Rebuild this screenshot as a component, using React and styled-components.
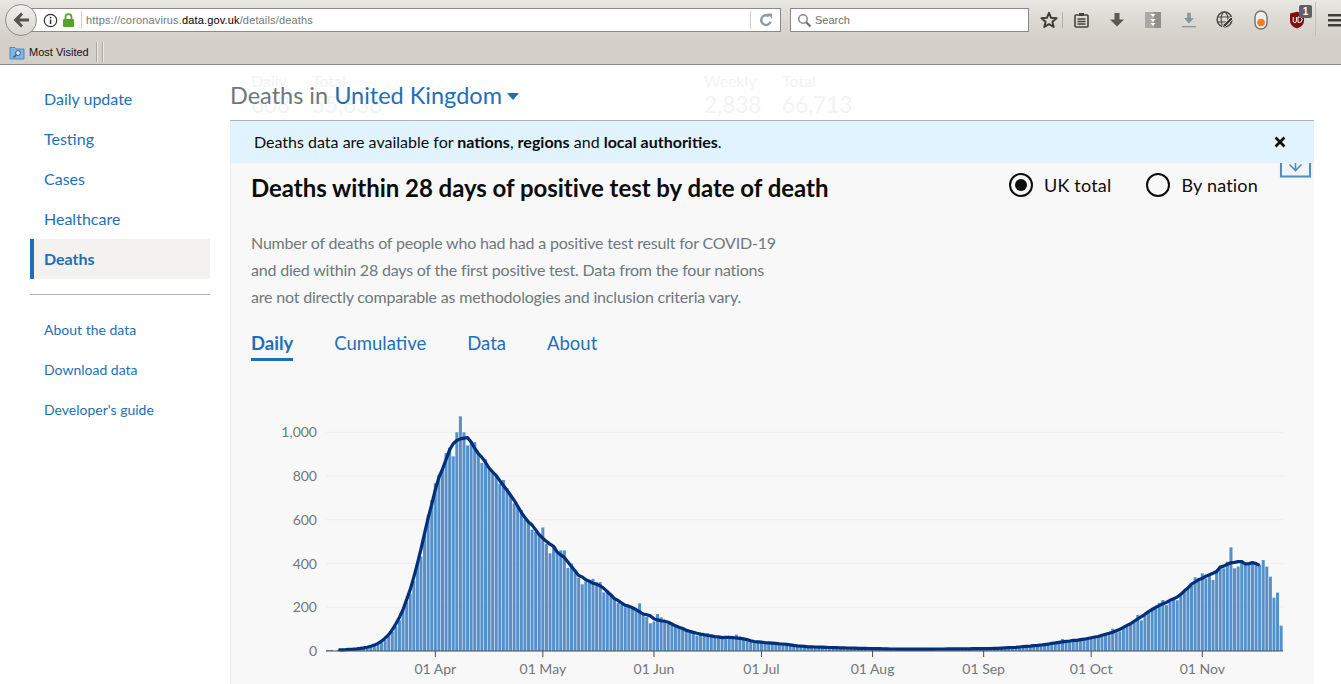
import React from 'react';
import styled, { createGlobalStyle } from 'styled-components';

const GlobalStyle = createGlobalStyle`
  html, body {
    margin: 0;
    padding: 0;
    background: #ffffff;
    overflow: hidden;
  }
  * {
    box-sizing: border-box;
  }
`;

const pageFont = `Lato, "Noto Sans", sans-serif`;
const chromeFont = `"Liberation Sans", Arial, sans-serif`;

const Window = styled.div`
  width: 1341px;
  height: 684px;
  overflow: hidden;
  display: flex;
  flex-direction: column;
  font-family: ${pageFont};
`;

/* browser chrome */
const Chrome = styled.div`
  height: 65px;
  flex: none;
  background: linear-gradient(#e9e7e3 0, #dcd9d3 20px, #d4d0c9 40px, #d3cfc8 100%);
  border-bottom: 1px solid #8b8b88;
  font-family: ${chromeFont};
  overflow: hidden;
`;

const NavRow = styled.div`
  height: 40px;
  display: flex;
  align-items: flex-start;
  padding: 4px 0 0 5px;
`;

const BackButton = styled.div`
  width: 32px;
  height: 32px;
  border-radius: 50%;
  flex: none;
  background: linear-gradient(#f1efec, #d9d6d0);
  border: 1px solid #8e8e8c;
  display: flex;
  align-items: center;
  justify-content: center;
  position: relative;
  z-index: 1;
`;

const UrlBar = styled.div`
  width: 759px;
  height: 24px;
  margin: 4px 0 0 -15px;
  padding-left: 17px;
  background: #ffffff;
  border: 1px solid #8a8a8a;
  display: flex;
  align-items: center;
  flex: none;
`;

const UrlIcon = styled.span`
  width: ${(p) => p.$w}px;
  flex: none;
  display: flex;
  align-items: center;
  justify-content: center;
`;

const UrlDivider = styled.span`
  width: 1px;
  height: 18px;
  background: #cfcfcf;
  flex: none;
  margin: ${(p) => p.$margin};
`;

const UrlText = styled.div`
  flex: 1;
  font-size: 11px;
  letter-spacing: 0.15px;
  color: #777777;
  white-space: nowrap;

  b {
    font-weight: 400;
    color: #000000;
  }
`;

const SearchBox = styled.div`
  width: 239px;
  height: 24px;
  margin: 4px 0 0 9px;
  background: #ffffff;
  border: 1px solid #8a8a8a;
  display: flex;
  align-items: center;
  gap: 3px;
  padding-left: 6px;
  font-size: 11px;
  color: #6d6d6d;
  flex: none;
`;

const ToolSlot = styled.div`
  width: ${(p) => p.$w || 36}px;
  margin-left: ${(p) => p.$ml || 0}px;
  height: 32px;
  flex: none;
  display: flex;
  align-items: center;
  justify-content: center;
  position: relative;
`;

const ToolDivider = styled.div`
  width: 1px;
  height: ${(p) => p.$h}px;
  margin-top: ${(p) => p.$top}px;
  background: ${(p) => p.$color};
  flex: none;
`;

const Badge = styled.span`
  position: absolute;
  top: 1px;
  left: 20px;
  width: 13px;
  height: 13px;
  border-radius: 2px;
  background: #5f6164;
  color: #ffffff;
  font-size: 10px;
  font-weight: 700;
  text-align: center;
  line-height: 13px;
`;

const BookmarkRow = styled.div`
  height: 24px;
  display: flex;
  align-items: center;
  padding-left: 9px;
  font-size: 11px;
  color: #111111;
`;

const BookmarkLabel = styled.span`
  margin-left: 4px;
`;

const DoubleBar = styled.span`
  width: 7px;
  height: 20px;
  margin-left: 7px;
  border-left: 1px solid #a9a6a0;
  border-right: 1px solid #a9a6a0;
  box-shadow: inset 1px 0 0 #f0eeea, 1px 0 0 #f0eeea;
`;

/* page */
const Page = styled.div`
  flex: 1;
  display: flex;
  gap: 20px;
  padding-left: 30px;
  min-height: 0;
`;

const Side = styled.nav`
  width: 180px;
  flex: none;
  padding-top: 14px;
`;

const SideItem = styled.a`
  display: flex;
  align-items: center;
  height: 40px;
  padding-bottom: 2px;
  padding-left: ${(p) => (p.$active ? 10 : 14)}px;
  font-size: ${(p) => (p.$small ? 14 : 16)}px;
  font-weight: ${(p) => (p.$active ? 700 : 400)};
  color: #1d70b8;
  background: ${(p) => (p.$active ? '#f3f2f1' : 'transparent')};
  border-left: ${(p) => (p.$active ? '4px solid #1d70b8' : 'none')};
`;

const SideRule = styled.hr`
  border: none;
  border-top: 1px solid #b1b4b6;
  margin: 15px 0 15px;
`;

const Main = styled.main`
  width: 1084px;
  flex: none;
  display: flex;
  flex-direction: column;
  min-height: 0;
`;

const TitleBar = styled.div`
  height: 55px;
  flex: none;
  position: relative;
  display: flex;
  align-items: center;
  padding-top: 4px;
  color: #6f777b;
  gap: 5px;
`;

const GhostStat = styled.div`
  position: absolute;
  top: 6px;
  left: ${(p) => p.$x}px;
  color: #f3f3f3;
  font-size: 16px;
  line-height: 20px;

  strong {
    display: block;
    font-size: 22.5px;
    font-weight: 400;
    line-height: 28px;
  }
`;

const Heading = styled.h1`
  position: relative;
  margin: 0;
  font-size: 23.5px;
  font-weight: 400;
  white-space: nowrap;

  span {
    color: #1d70b8;
  }
`;

const Caret = styled.span`
  position: relative;
  width: 0;
  height: 0;
  margin-top: 3px;
  border-left: 6px solid transparent;
  border-right: 6px solid transparent;
  border-top: 7px solid #1d70b8;
`;

const Banner = styled.div`
  height: 43px;
  flex: none;
  border-top: 1px solid #b1b4b6;
  background: #e1f3fe;
  display: flex;
  align-items: center;
  justify-content: space-between;
  padding: 0 28px 2px 24px;
  font-size: 16px;
  color: #0b0c0c;
  position: relative;
  z-index: 1;

  b {
    font-weight: 700;
  }

  svg {
    margin-top: 2px;
  }
`;

const Card = styled.section`
  flex: 1;
  min-height: 0;
  background: #f8f8f8;
  border-left: 1px solid #eeeeee;
  padding: 9px 0 0 20px;
  position: relative;
  overflow: hidden;
`;

const DownloadTab = styled.div`
  position: absolute;
  top: 0;
  right: 1px;
  width: 35px;
  height: 15px;
  background: #f3f3f3;
  display: flex;
  justify-content: center;
`;

const CardHead = styled.div`
  display: flex;
  align-items: center;
  height: 30px;
`;

const CardTitle = styled.h2`
  margin: 0;
  font-size: 24px;
  font-weight: 700;
  letter-spacing: -0.04px;
  color: #0b0c0c;
  white-space: nowrap;
`;

const RadioGroup = styled.div`
  margin-left: auto;
  padding-right: 56px;
  display: flex;
  gap: 35px;
  margin-top: -4px;
`;

const Radio = styled.label`
  display: flex;
  align-items: center;
  gap: 11px;
  font-size: 18px;
  letter-spacing: 0.2px;
  color: #0b0c0c;
`;

const RadioMark = styled.span`
  width: 24px;
  height: 24px;
  border-radius: 50%;
  border: 2px solid #0b0c0c;
  display: flex;
  align-items: center;
  justify-content: center;

  &::after {
    content: '';
    width: 12px;
    height: 12px;
    border-radius: 50%;
    background: ${(p) => (p.$on ? '#0b0c0c' : 'transparent')};
  }
`;

const Description = styled.p`
  margin: 27px 0 0;
  font-size: 16px;
  letter-spacing: -0.19px;
  line-height: 27px;
  color: #6f777b;
`;

const Tabs = styled.div`
  display: flex;
  gap: 41px;
  margin-top: 21px;
`;

const Tab = styled.a`
  font-size: 18.5px;
  line-height: 24px;
  padding-bottom: 3px;
  color: #1d70b8;
  font-weight: ${(p) => (p.$active ? 700 : 400)};
  border-bottom: 3px solid ${(p) => (p.$active ? '#1d70b8' : 'transparent')};
`;

const ChartSvg = styled.svg`
  display: block;
  margin: 39px 0 0 -21px;
`;

// daily deaths from 2 Mar
const daily = [
  5, 5, 0, 6, 6, 6, 7, 8, 10, 11, 13, 15, 18, 24, 30, 38, 50, 68, 88, 112,
  140, 187, 225, 262, 320, 400, 432, 540, 620, 690, 767, 805, 835, 905, 930, 890, 1000, 1073, 1000, 940,
  955, 955, 905, 860, 877, 830, 815, 800, 765, 782, 745, 715, 675, 660, 645, 600, 590, 555, 545, 530,
  565, 490, 447, 480, 450, 460, 460, 380, 400, 365, 335, 305, 318, 315, 330, 315, 315, 268, 278, 262,
  240, 220, 210, 200, 205, 195, 190, 218, 165, 155, 127, 135, 169, 154, 130, 125, 128, 112, 105, 110,
  95, 85, 85, 70, 78, 72, 82, 70, 65, 60, 55, 58, 60, 62, 75, 66, 50, 45, 48, 42,
  40, 40, 40, 38, 34, 36, 33, 32, 30, 28, 30, 22, 20, 18, 18, 20, 20, 18, 18, 16,
  16, 16, 15, 14, 14, 14, 13, 13, 12, 12, 12, 12, 11, 11, 10, 10, 10, 9, 9, 9,
  8, 8, 8, 8, 9, 9, 8, 9, 9, 8, 9, 9, 10, 9, 10, 10, 9, 10, 10,
  10, 11, 10, 11, 11, 10, 11, 12, 12, 13, 14, 15, 16, 17, 18, 19, 21, 22, 24, 26,
  27, 30, 30, 32, 35, 38, 55, 40, 44, 48, 46, 50, 55, 60, 58, 62, 68, 70, 75, 72,
  102, 85, 90, 105, 120, 120, 135, 165, 140, 170, 180, 190, 195, 220, 233, 210, 225, 240, 232,
  262, 270, 285, 300, 337, 330, 355, 332, 345, 325, 370, 385, 378, 408, 474, 378, 386, 416, 398, 398,
  408, 400, 393, 416, 386, 340, 244, 267, 116,
];

const left = 96;
const step = 3.584;
const base = 251;
const perDeath = 0.2187;

const xAt = (i) => left + (i + 0.5) * step;
const yAt = (v) => base - v * perDeath;

const linePoints = daily
  .map((_, i) => {
    if (i < 3 || i > 260) return null;
    const win = daily.slice(i - 3, i + 4);
    const avg = win.reduce((a, b) => a + b, 0) / win.length;
    return `${xAt(i).toFixed(1)},${yAt(avg).toFixed(1)}`;
  })
  .filter(Boolean)
  .join(' ');

const yTicks = [0, 200, 400, 600, 800, 1000];
const xTicks = [
  ['01 Apr', 30],
  ['01 May', 60],
  ['01 Jun', 91],
  ['01 Jul', 121],
  ['01 Aug', 152],
  ['01 Sep', 183],
  ['01 Oct', 213],
  ['01 Nov', 244],
];

const DeathsChart = () => (
  <ChartSvg width="1083" height="284" viewBox="0 0 1083 284" fontFamily={pageFont} fontSize="14" fill="#6f777b">
    {yTicks.map((t) => (
      <g key={t}>
        {t > 0 && <line x1={left} x2="1053" y1={yAt(t)} y2={yAt(t)} stroke="#eeeeee" />}
        <text x="87" y={yAt(t) + 5} textAnchor="end">{t.toLocaleString('en-GB')}</text>
      </g>
    ))}
    {daily.map((v, i) => (
      <rect key={i} x={xAt(i) - 1.5} y={yAt(v)} width="3" height={base - yAt(v)} fill="#5590cb" />
    ))}
    <polyline points={linePoints} fill="none" stroke="#00307a" strokeWidth="3.2" strokeLinejoin="round" />
    <line x1={left} x2="1053" y1={base} y2={base} stroke="#4a4f55" strokeWidth="1.2" />
    {xTicks.map(([label, i]) => (
      <g key={label}>
        <line x1={xAt(i)} x2={xAt(i)} y1={base} y2={base + 6} stroke="#4a4f55" />
        <text x={xAt(i)} y={base + 23} textAnchor="middle">{label}</text>
      </g>
    ))}
  </ChartSvg>
);

/* toolbar drawings */
const BackIcon = () => (
  <svg width="20" height="20" viewBox="0 0 20 20">
    <path d="M10 2.5 2.5 10l7.5 7.5 2-2L8.4 11.5H18v-3H8.4L12 4.5z" fill="#57534a" />
  </svg>
);

const InfoIcon = () => (
  <svg width="15" height="15" viewBox="0 0 15 15" fill="none">
    <circle cx="7.5" cy="7.5" r="6.2" stroke="#333" strokeWidth="1.2" />
    <rect x="6.8" y="6.5" width="1.5" height="4.6" fill="#333" />
    <rect x="6.8" y="3.8" width="1.5" height="1.6" fill="#333" />
  </svg>
);

const LockIcon = () => (
  <svg width="13" height="14" viewBox="0 0 13 14" fill="none">
    <path d="M3.5 6V4.2a3 3 0 0 1 6 0V6" stroke="#55a32c" strokeWidth="1.8" />
    <rect x="1" y="6" width="11" height="8" rx="1" fill="#55a32c" />
  </svg>
);

const ReloadIcon = () => (
  <svg width="14" height="14" viewBox="0 0 14 14" fill="none">
    <path d="M11.6 8.6A4.8 4.8 0 1 1 9.8 3.2" stroke="#8c98a4" strokeWidth="2.4" />
    <path d="M8 .4h5v5z" fill="#8c98a4" />
  </svg>
);

const SearchIcon = () => (
  <svg width="15" height="15" viewBox="0 0 15 15" fill="none">
    <circle cx="6" cy="6" r="4.2" stroke="#8a8a8a" strokeWidth="1.5" />
    <path d="M9.2 9.2 13.5 13.5" stroke="#6f6f6f" strokeWidth="2.2" />
  </svg>
);

const StarIcon = () => (
  <svg width="18" height="18" viewBox="0 0 18 18" fill="none">
    <path d="M9 1.8 11.1 6.8 16.5 7.2 12.4 10.7 13.7 16 9 13.2 4.3 16 5.6 10.7 1.5 7.2 6.9 6.8z" stroke="#3f3d36" strokeWidth="2" strokeLinejoin="round" />
  </svg>
);

const ClipboardIcon = () => (
  <svg width="15" height="16" viewBox="0 0 15 16" fill="none">
    <rect x="1" y="3" width="13" height="12" rx="1" stroke="#45433c" strokeWidth="1.6" />
    <rect x="5" y="1" width="5" height="3" fill="#45433c" />
    <path d="M3.5 7h8M3.5 9.5h8M3.5 12h8" stroke="#45433c" strokeWidth="1.3" />
  </svg>
);

const DownArrowIcon = ({ color = '#5c5a50', bar }) => (
  <svg width="16" height="16" viewBox="0 0 16 16">
    <path d="M5.5 1h5v6.5H15L8 14.5 1 7.5h4.5z" fill={color} transform={bar ? 'translate(2.4 0) scale(.7 .8)' : undefined} />
    {bar && <rect x="1" y="14" width="14" height="1.3" fill={color} />}
  </svg>
);

const ZipIcon = () => (
  <svg width="16" height="18" viewBox="0 0 16 18">
    <rect x="0" y="1" width="16" height="16" fill="#a9a8a4" />
    <path d="M9 1h7v16H9z" fill="#8f8e8a" />
    <path d="M5.5 3h5l-2.5 3zM5.5 8h5l-2.5 3zM5.5 12h5l-2.5 3z" fill="#ffffff" />
  </svg>
);

const GlobeIcon = () => (
  <svg width="18" height="18" viewBox="0 0 18 18" fill="none" stroke="#4a4944" strokeWidth="1.1">
    <circle cx="8.5" cy="8.5" r="7.4" strokeWidth="1.5" />
    <ellipse cx="8.5" cy="8.5" rx="3.4" ry="7.4" />
    <path d="M1.5 6h14M1.5 11h14" />
    <path d="M15 6 7.4 13.6 6 17l3.4-1.4L17 8z" fill="#3c3b37" stroke="#dcd9d3" strokeWidth="1" />
  </svg>
);

const ToggleIcon = () => (
  <svg width="14" height="20" viewBox="0 0 14 20">
    <rect x="1" y="1" width="12" height="18" rx="6" fill="#eeeeee" stroke="#6f7276" strokeWidth="1.4" />
    <circle cx="7" cy="12.5" r="3.8" fill="#f47b20" />
  </svg>
);

const ShieldIcon = () => (
  <svg width="16" height="18" viewBox="0 0 16 18">
    <path d="M8 .8 15 2.5v7c0 4-3 6.6-7 7.9-4-1.3-7-3.9-7-7.9v-7z" fill="#7f0e13" />
    <path d="M4.2 6v4a1.6 1.6 0 0 0 3.2 0V6M9 6v5.4h1.4a2.7 2.7 0 0 0 0-5.4z" fill="none" stroke="#ffffff" strokeWidth="1" />
  </svg>
);

const MenuIcon = () => (
  <svg width="16" height="14" viewBox="0 0 16 14">
    <path d="M0 1h16v2.4H0zM0 6h16v2.4H0zM0 11h16v2.4H0z" fill="#3f3d37" />
  </svg>
);

const FolderIcon = () => (
  <svg width="16" height="15" viewBox="0 0 16 15">
    <path d="M1 2.5h5l1.2 1.5H15v10H1z" fill="#7db7e4" stroke="#4d88b8" />
    <circle cx="9" cy="8" r="2.4" fill="#dcecf8" stroke="#2c5f92" />
    <path d="M7.3 9.8 4.5 12.3" stroke="#2c5f92" strokeWidth="1.6" />
  </svg>
);

const CloseIcon = () => (
  <svg width="12" height="12" viewBox="0 0 12 12">
    <path d="M1.5 1.5 10.5 10.5M10.5 1.5 1.5 10.5" stroke="#0b0c0c" strokeWidth="2.6" />
  </svg>
);

const DownloadBoxIcon = () => (
  <svg width="31" height="15" viewBox="0 0 31 15" fill="none">
    <path d="M1 0v13.5h29V0" stroke="#4f8cc6" strokeWidth="2" />
    <path d="M9.5 1.5 15.5 7.5 21.5 1.5M15.5 0v7" stroke="#4f8cc6" strokeWidth="1.6" />
  </svg>
);

const App = () => (
  <Window>
    <GlobalStyle />
    <Chrome>
      <NavRow>
        <BackButton><BackIcon /></BackButton>
        <UrlBar>
          <UrlIcon $w={20}><InfoIcon /></UrlIcon>
          <UrlIcon $w={16}><LockIcon /></UrlIcon>
          <UrlDivider $margin="0 4px 0 5px" />
          <UrlText>https://coronavirus.<b>data.gov.uk</b>/details/deaths</UrlText>
          <UrlDivider $margin="0 8px 0 0" />
          <UrlIcon $w={14}><ReloadIcon /></UrlIcon>
          <UrlIcon $w={7} />
        </UrlBar>
        <SearchBox><SearchIcon />Search</SearchBox>
        <ToolSlot $w={26} $ml={7}><StarIcon /></ToolSlot>
        <ToolDivider $h={16} $top={8} $color="#b5b2ab" />
        <ToolSlot><ClipboardIcon /></ToolSlot>
        <ToolSlot><DownArrowIcon /></ToolSlot>
        <ToolSlot><ZipIcon /></ToolSlot>
        <ToolSlot><DownArrowIcon color="#87949c" bar /></ToolSlot>
        <ToolSlot><GlobeIcon /></ToolSlot>
        <ToolSlot><ToggleIcon /></ToolSlot>
        <ToolSlot>
          <ShieldIcon />
          <Badge>1</Badge>
        </ToolSlot>
        <ToolDivider $h={34} $top={-2} $color="#c2bfb8" />
        <ToolSlot $w={40}><MenuIcon /></ToolSlot>
      </NavRow>
      <BookmarkRow>
        <FolderIcon />
        <BookmarkLabel>Most Visited</BookmarkLabel>
        <DoubleBar />
      </BookmarkRow>
    </Chrome>
    <Page>
      <Side>
        <SideItem>Daily update</SideItem>
        <SideItem>Testing</SideItem>
        <SideItem>Cases</SideItem>
        <SideItem>Healthcare</SideItem>
        <SideItem $active>Deaths</SideItem>
        <SideRule />
        <SideItem $small>About the data</SideItem>
        <SideItem $small>Download data</SideItem>
        <SideItem $small>Developer's guide</SideItem>
      </Side>
      <Main>
        <TitleBar>
          <GhostStat $x={21}>Daily<strong>608</strong></GhostStat>
          <GhostStat $x={82}>Total<strong>55,838</strong></GhostStat>
          <GhostStat $x={474}>Weekly<strong>2,838</strong></GhostStat>
          <GhostStat $x={552}>Total<strong>66,713</strong></GhostStat>
          <Heading>Deaths in <span>United Kingdom</span></Heading>
          <Caret />
        </TitleBar>
        <Banner>
          <span>Deaths data are available for <b>nations</b>, <b>regions</b> and <b>local authorities</b>.</span>
          <CloseIcon />
        </Banner>
        <Card>
          <DownloadTab><DownloadBoxIcon /></DownloadTab>
          <CardHead>
            <CardTitle>Deaths within 28 days of positive test by date of death</CardTitle>
            <RadioGroup>
              <Radio><RadioMark $on />UK total</Radio>
              <Radio><RadioMark />By nation</Radio>
            </RadioGroup>
          </CardHead>
          <Description>
            Number of deaths of people who had had a positive test result for COVID-19<br />
            and died within 28 days of the first positive test. Data from the four nations<br />
            are not directly comparable as methodologies and inclusion criteria vary.
          </Description>
          <Tabs>
            <Tab $active>Daily</Tab>
            <Tab>Cumulative</Tab>
            <Tab>Data</Tab>
            <Tab>About</Tab>
          </Tabs>
          <DeathsChart />
        </Card>
      </Main>
    </Page>
  </Window>
);

export default App;
